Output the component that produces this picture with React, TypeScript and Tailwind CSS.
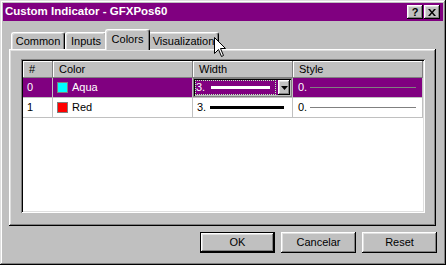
import React from "react";

const rows = [
  { id: "0", name: "Aqua", color: "bg-[#00ffff]", selected: true },
  { id: "1", name: "Red", color: "bg-[#ff0000]", selected: false },
];

function TitleButton({ children }: { children: React.ReactNode }) {
  return (
    <div className="flex h-[14px] w-[16px] items-center justify-center bg-[#c0c0c0] shadow-[inset_-1px_-1px_#000,inset_1px_1px_#fff,inset_-2px_-2px_#808080,inset_2px_2px_#dfdfdf]">
      {children}
    </div>
  );
}

function Tab({ label, width, active }: { label: string; width: string; active?: boolean }) {
  if (active) {
    return (
      <div
        className={`relative z-10 -mx-[2px] -mb-px flex h-[21px] items-center justify-center rounded-t-[3px] border-t border-l border-r border-white border-r-black bg-[#c0c0c0] pb-[2px] shadow-[inset_-1px_0_#808080,inset_1px_1px_#dfdfdf] ${width}`}
      >
        {label}
      </div>
    );
  }
  return (
    <div
      className={`flex h-[17px] items-center justify-center rounded-t-[3px] border-t border-l border-r border-white border-r-black bg-[#c0c0c0] shadow-[inset_-1px_0_#808080,inset_1px_1px_#dfdfdf] ${width}`}
    >
      {label}
    </div>
  );
}

function PushButton({ label, isDefault }: { label: string; isDefault?: boolean }) {
  if (isDefault) {
    return (
      <div className="flex h-[21px] w-[75px] items-center justify-center border border-black bg-[#c0c0c0] shadow-[inset_-1px_-1px_#000,inset_1px_1px_#fff,inset_-2px_-2px_#808080,inset_2px_2px_#dfdfdf]">
        {label}
      </div>
    );
  }
  return (
    <div className="flex h-[21px] w-[75px] items-center justify-center bg-[#c0c0c0] shadow-[inset_-1px_-1px_#000,inset_1px_1px_#fff,inset_-2px_-2px_#808080,inset_2px_2px_#dfdfdf]">
      {label}
    </div>
  );
}

export default function App() {
  return (
    <div className="h-[265px] w-[446px] bg-[#c0c0c0] font-['Liberation_Sans',Arial,sans-serif] text-[11px] leading-none text-black">
      <div className="relative flex h-full w-full flex-col p-[3px] shadow-[inset_-1px_-1px_#000,inset_1px_1px_#dfdfdf,inset_-2px_-2px_#808080,inset_2px_2px_#fff]">
        {/* title bar */}
        <div className="flex h-[18px] items-center justify-between bg-[#800080] pl-[2px] pr-[3px]">
          <span className="text-[11.5px] font-bold text-white">Custom Indicator - GFXPos60</span>
          <div className="flex gap-px">
            <TitleButton>
              <span className="text-[11px] font-bold">?</span>
            </TitleButton>
            <TitleButton>
              <svg width="8" height="7" viewBox="0 0 8 7">
                <path d="M0 0h2l2 2.5L6 0h2L5 3.5 8 7H6L4 4.5 2 7H0l3-3.5z" fill="#000" />
              </svg>
            </TitleButton>
          </div>
        </div>

        {/* tabs */}
        <div className="ml-[6px] mt-[8px] flex h-[20px] items-end pl-[2px]">
          <Tab label="Common" width="w-[54px]" />
          <Tab label="Inputs" width="w-[42px]" />
          <Tab label="Colors" width="w-[45px]" active />
          <Tab label="Visualization" width="w-[71px]" />
        </div>

        {/* panel */}
        <div className="ml-[6px] h-[177px] w-[427px] pl-[12px] pt-[10px] shadow-[inset_-1px_-1px_#000,inset_1px_1px_#fff,inset_-2px_-2px_#808080,inset_2px_2px_#dfdfdf]">
          <div className="h-[154px] w-[404px] bg-white p-[2px] shadow-[inset_1px_1px_#808080,inset_-1px_-1px_#fff,inset_2px_2px_#000,inset_-2px_-2px_#dfdfdf]">
            <div className="grid grid-cols-[30px_140px_100px_130px]">
              {["#", "Color", "Width", "Style"].map((h) => (
                <div
                  key={h}
                  className="flex h-[17px] items-center bg-[#c0c0c0] pl-[6px] shadow-[inset_-1px_-1px_#808080,inset_1px_1px_#fff]"
                >
                  {h}
                </div>
              ))}

              {rows.map((r) => {
                const cell = r.selected
                  ? "flex h-[20px] items-center border-r border-b border-[#c0c0c0] bg-[#800080] text-white"
                  : "flex h-[20px] items-center border-r border-b border-[#c0c0c0] bg-white text-black";
                return (
                  <React.Fragment key={r.id}>
                    <div className={`${cell} pl-[4px]`}>{r.id}</div>
                    <div className={`${cell} pl-[4px]`}>
                      <span className={`h-[11px] w-[11px] border border-[#808080] ${r.color}`} />
                      <span className="ml-[4px]">{r.name}</span>
                    </div>
                    {r.selected ? (
                      <div className="flex h-[20px] items-start border-r border-b border-[#c0c0c0] bg-white">
                        <div className="flex h-[19px] w-full items-center gap-[2px] border border-[#808080] bg-[#800080] p-px shadow-[inset_1px_1px_#000,inset_-1px_-1px_#c0c0c0]">
                          <div className="flex h-[15px] flex-1 items-center border border-dotted border-[#b8ffb8] text-white">
                            <span>3.</span>
                            <span className="ml-[6px] h-[3px] w-[59px] bg-white" />
                          </div>
                          <div className="flex h-[15px] w-[12px] items-center justify-center bg-[#c0c0c0] shadow-[inset_-1px_-1px_#000,inset_1px_1px_#fff,inset_-2px_-2px_#808080,inset_2px_2px_#dfdfdf]">
                            <svg width="7" height="4" viewBox="0 0 7 4">
                              <path d="M0 0h7L3.5 4z" fill="#000" />
                            </svg>
                          </div>
                        </div>
                      </div>
                    ) : (
                      <div className={`${cell} pl-[4px]`}>
                        <span>3.</span>
                        <span className="ml-[4px] h-[3px] w-[74px] bg-black" />
                      </div>
                    )}
                    <div className={`${cell} pl-[5px]`}>
                      <span>0.</span>
                      <span className="ml-[3px] h-px w-[106px] bg-[#808080]" />
                    </div>
                  </React.Fragment>
                );
              })}
            </div>
          </div>
        </div>

        {/* buttons */}
        <div className="mt-[6px] flex justify-end gap-[6px] pr-[6px]">
          <PushButton label="OK" isDefault />
          <PushButton label="Cancelar" />
          <PushButton label="Reset" />
        </div>

        {/* mouse pointer */}
        <svg className="absolute left-[214px] top-[37px]" width="13" height="21" viewBox="0 0 13 21">
          <path d="M0.5 0.5V16.5L4.5 12.5L7.5 19.5L9.5 18.5L6.5 11.5H11.5Z" fill="#fff" stroke="#000" />
        </svg>
      </div>
    </div>
  );
}
